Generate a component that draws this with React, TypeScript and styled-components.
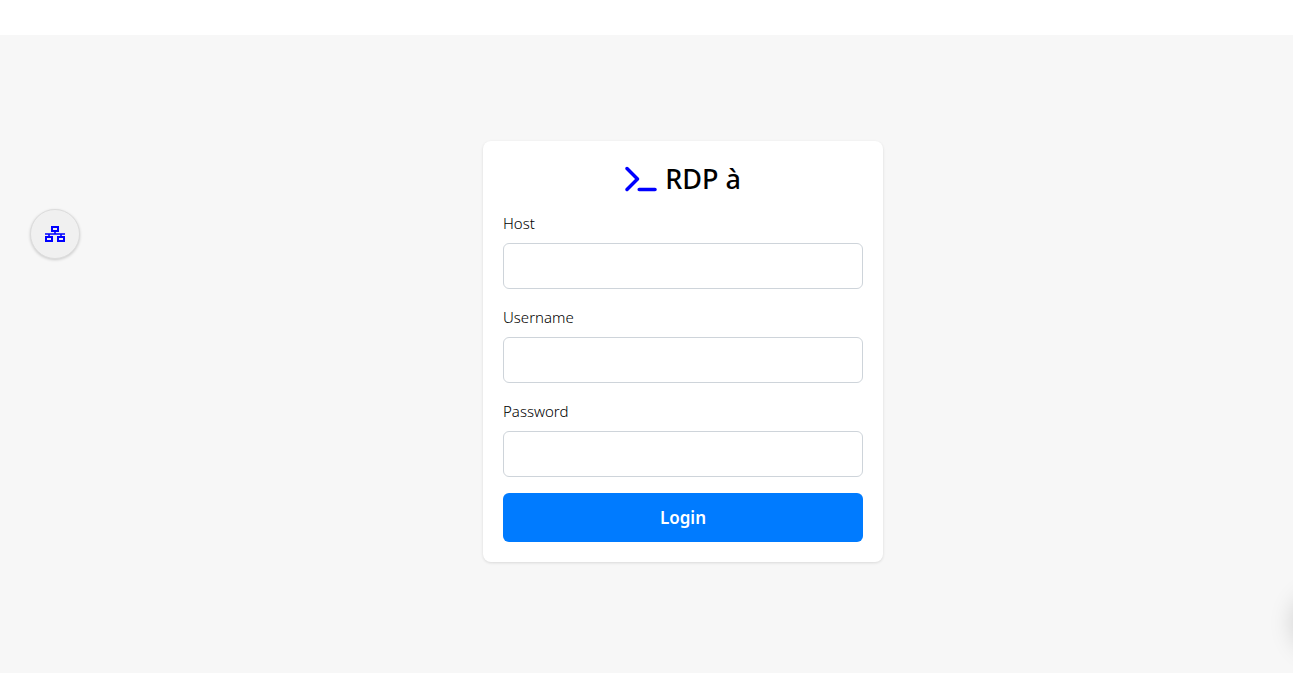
import React from 'react';
import styled, { createGlobalStyle } from 'styled-components';
import { FaTerminal } from 'react-icons/fa6';

const GlobalStyle = createGlobalStyle`
  *, *::before, *::after { box-sizing: border-box; }
  body {
    margin: 0;
    background: #fff;
    color: #000;
    font-family: 'Segoe UI', 'Noto Sans', sans-serif;
    overflow-x: hidden;
  }
`;

const Page = styled.div`
  display: flex;
  flex-direction: column;
  min-height: 100vh;
`;

const TopBar = styled.header`
  height: 35px;
  background: #fff;
`;

const Workspace = styled.div`
  flex: 1;
  display: flex;
  background: #f7f7f7;
`;

const Rail = styled.aside`
  flex: none;
  width: 73px;
  padding: 174px 0 0 30px;
`;

const RoundButton = styled.button`
  display: flex;
  align-items: center;
  justify-content: center;
  width: 50px;
  height: 50px;
  padding: 0;
  border: 1px solid #dcdcdc;
  border-radius: 50%;
  background: #f0f0f0;
  color: #00f;
  box-shadow: 0 1px 3px rgba(0, 0, 0, 0.18);
  cursor: pointer;
`;

const Stage = styled.main`
  flex: 1;
  display: flex;
  justify-content: center;
  align-items: flex-start;
  padding: 106px 0 40px;
`;

const Card = styled.form`
  width: 400px;
  padding: 20px;
  border-radius: 8px;
  background: #fff;
  box-shadow: 0 1px 3px rgba(0, 0, 0, 0.12);
`;

const Title = styled.h1`
  display: flex;
  align-items: center;
  justify-content: center;
  gap: 8px;
  margin: 0 0 14px;
  font-size: 27px;
  line-height: 36px;
  font-weight: 500;

  svg { width: 32px; height: 28px; color: #00f; }
`;

const Field = styled.div`
  display: flex;
  flex-direction: column;
  gap: 8px;
  margin-bottom: 16px;
`;

const Label = styled.label`
  font-size: 15px;
  line-height: 24px;
  font-weight: 300;
  color: #000;
`;

const Input = styled.input`
  width: 100%;
  height: 46px;
  padding: 10px;
  border: 1px solid #ced4da;
  border-radius: 6px;
  background: #fff;
  font: inherit;
  font-size: 16px;
`;

const LoginButton = styled.button`
  display: block;
  width: 100%;
  height: 49px;
  border: 0;
  border-radius: 6px;
  background: #007bff;
  color: #fff;
  font-family: inherit;
  font-size: 17px;
  font-weight: 600;
  cursor: pointer;
`;

const EdgeBubble = styled.div`
  position: fixed;
  right: -60px;
  bottom: 20px;
  width: 60px;
  height: 60px;
  border-radius: 50%;
  box-shadow: 0 0 24px rgba(0, 0, 0, 0.17);
`;

const NetworkIcon = () => (
  <svg width="20" height="16" viewBox="0 0 20 16" fill="none" stroke="currentColor" aria-hidden="true">
    <g strokeWidth="2">
      <rect x="7" y="1" width="6" height="4" />
      <rect x="1" y="11" width="6" height="4" />
      <rect x="13" y="11" width="6" height="4" />
    </g>
    <path d="M0 8H20M10 6V8M4 8V10M16 8V10" strokeWidth="1.6" />
  </svg>
);

const fields = [
  { id: 'host', label: 'Host', type: 'text' },
  { id: 'username', label: 'Username', type: 'text' },
  { id: 'password', label: 'Password', type: 'password' },
];

export default function App() {
  return (
    <Page>
      <GlobalStyle />
      <TopBar />
      <Workspace>
        <Rail>
          <RoundButton type="button" aria-label="Network">
            <NetworkIcon />
          </RoundButton>
        </Rail>
        <Stage>
          <Card onSubmit={(event) => event.preventDefault()}>
            <Title>
              <FaTerminal aria-hidden />
              RDP à
            </Title>
            {fields.map(({ id, label, type }) => (
              <Field key={id}>
                <Label htmlFor={id}>{label}</Label>
                <Input id={id} name={id} type={type} />
              </Field>
            ))}
            <LoginButton type="submit">Login</LoginButton>
          </Card>
        </Stage>
      </Workspace>
      <EdgeBubble />
    </Page>
  );
}
